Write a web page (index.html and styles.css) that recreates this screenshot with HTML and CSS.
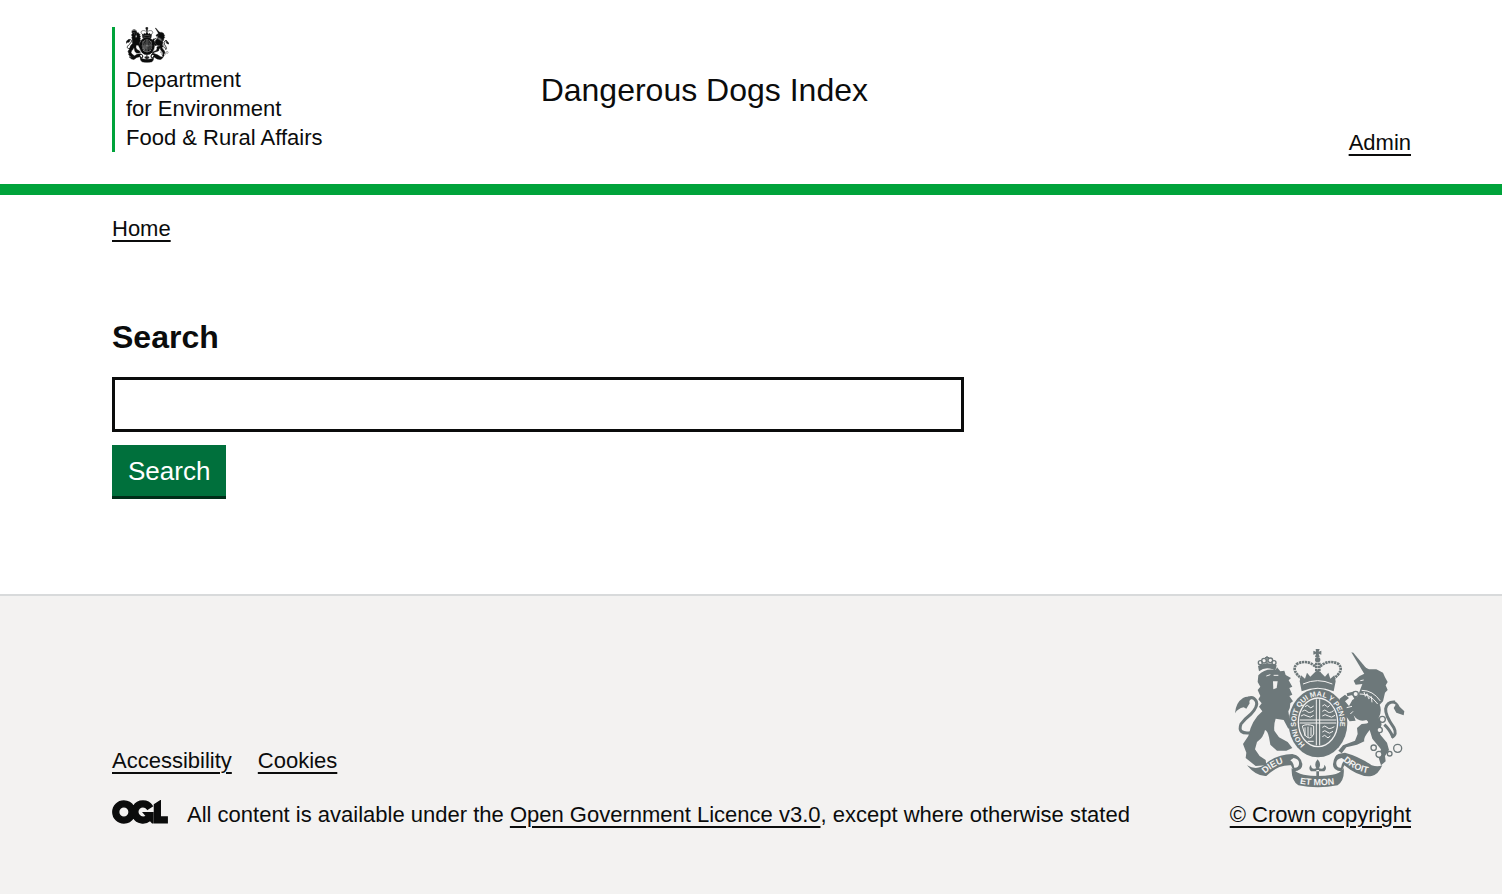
FILE: index.html
```html
<!DOCTYPE html>
<html lang="en">
<head>
<meta charset="utf-8">
<meta name="viewport" content="width=device-width, initial-scale=1">
<title>Dangerous Dogs Index</title>
<link rel="stylesheet" href="styles.css">
</head>
<body>
<svg class="sprite" aria-hidden="true">
  <symbol id="crest" viewBox="36 27 510 420">
    <!-- lion -->
    <path d="M106 106 Q126 84 158 90 L162 82 L172 94 L184 92 L188 105 L204 114 L197 121 L208 140 L199 144 L208 164 L199 168 L210 184 L202 190 Q202 204 196 214 L200 240 L214 254 L196 266 L182 240 L158 236 Q152 252 154 272 L168 292 L194 306 L208 324 L190 332 L162 332 L142 314 L138 292 Q134 272 126 270 Q122 292 102 306 L96 328 L110 348 L128 360 L130 376 L98 378 L68 354 L70 338 L60 312 L76 288 Q86 240 118 214 L108 200 L116 190 L106 178 L112 168 L104 150 L112 140 L104 126Z"/>
    <path d="M130 108 l12 -4 m10 2 l14 0" class="crest-cut-line"/>
    <path class="crest-cut" d="M150 124 l14 0 l-3 20 l-10 4z"/>
    <path class="crest-line" d="M84 278 Q42 284 54 252 Q64 238 84 222 Q106 198 100 184 Q92 168 76 174"/>
    <path d="M36 220 Q38 188 60 174 Q76 166 88 176 Q76 180 80 190 L70 206 L62 202 Q44 206 36 220Z"/>
    <!-- small crown -->
    <path d="M108 94 L105 78 Q132 62 161 76 L157 92 Q130 76 108 94Z"/>
    <g class="crest-thin"><circle cx="112" cy="68" r="6"/><circle cx="123" cy="62" r="7"/><circle cx="142" cy="61" r="7"/><circle cx="153" cy="68" r="6"/><path d="M132 48V76M126 53h12"/></g>
    <!-- main crown -->
    <path d="M278 27h12l-3 8 8-3v12l-8-3 3 10h-14l3-10-8 3V32l8 3z"/>
    <circle cx="284" cy="59" r="8"/>
    <g class="crest-beads"><path d="M238 118 Q202 90 222 72 Q252 56 280 82"/><path d="M330 118 Q366 90 346 72 Q316 56 288 82"/><path d="M280 68V110M289 68V110"/></g>
    <path d="M230 124 L234 106 L246 116 L252 98 L262 110 L274 98 L284 90 L294 98 L306 110 L316 98 L322 116 L334 106 L338 124 L332 154 Q284 132 236 154Z"/>
    <path class="crest-cut-line" d="M240 132 Q284 112 328 132"/>
    <!-- garter and shield -->
    <ellipse cx="285" cy="249" rx="88" ry="103"/>
    <ellipse class="crest-cut" cx="285" cy="247" rx="61" ry="75"/>
    <ellipse cx="285" cy="247" rx="57" ry="71"/>
    <g class="crest-cut-line">
      <path d="M280 178V316M290 178V316M230 240H340M230 249H340"/>
      <path d="M246 200q8-8 12 0t14-2M238 214q8-8 14 0t20-2M234 228q8-8 18 0t20-2M298 198q8-8 12 0t10-2M298 214q8-8 14 0t20-2M298 228q8-8 18 0t20-2"/>
      <path d="M238 258q14-8 34 0v24q-10 22-26 4zM246 262v26M255 260v32M264 262v26"/>
      <path d="M298 262q8-8 14 0t22-2M298 276q8-8 14 0t18-2M298 290q8-8 12 0t12-2M254 304h18"/>
    </g>
    <!-- unicorn -->
    <path d="M385 37 L391 38 L436 92 L424 102Z"/>
    <path d="M424 101 L422 80 L438 88 L460 88 L480 98 L486 112 L494 126 L488 136 L494 150 L486 158 L480 184 L470 194 Q478 212 467 234 Q484 252 468 270 L472 284 L492 308 L498 330 L486 348 L488 364 L474 376 L466 350 L474 328 L448 296 L440 270 Q420 294 424 304 L402 314 L370 322 L356 340 L346 332 L360 316 L396 302 L404 282 L402 264 L416 252 Q446 252 430 240 Q406 248 392 226 L398 242 L380 244 L360 216 L348 192 L350 176 L366 164 L378 174 L366 184 L378 198 L388 180 L404 170 L412 148 L418 132 L398 134 L392 122 L410 108Z"/>
    <path class="crest-line" d="M372 164 L390 160 L402 182"/>
    <g class="crest-cut-line"><path d="M412 122l10-2M410 162q30-2 54 30M416 151q34 0 56 32M423 156l4 13 5-8 5 15 8-6 2 17M375 180l9 4M371 203l16-4M382 222l8-8"/></g>
    <path class="crest-line" d="M506 292 Q524 284 512 262 Q486 226 488 206 Q492 184 516 186"/>
    <path d="M502 184 Q520 178 530 200 L544 214 L542 226 L520 218 L512 204 L518 194Z"/>
    <path class="crest-line" d="M484 254 Q500 268 510 292"/>
    <g class="crest-ring"><circle cx="398" cy="162" r="8"/><circle cx="478" cy="238" r="9"/><circle cx="470" cy="270" r="8"/><circle cx="452" cy="323" r="8"/><circle cx="468" cy="343" r="9"/><circle cx="500" cy="341" r="7"/><circle cx="524" cy="325" r="12"/></g>
    <!-- ribbon -->
    <path d="M72 376 Q104 394 130 370 Q164 342 208 342 Q236 348 238 374 Q238 392 212 394 L204 376 Q164 374 130 408 Q100 410 72 376Z"/>
    <path d="M346 342 Q332 348 330 374 Q330 392 356 394 L364 376 Q410 414 446 408 Q466 404 478 376 Q464 382 446 376 Q410 350 366 338Z"/>
    <path d="M206 384 Q220 400 242 404 Q284 412 328 404 Q350 402 362 384 Q366 420 344 436 Q284 448 226 436 Q204 422 206 384Z"/>
    <path class="crest-cut" d="M212 354q18 4 16 18-1 12-14 11-2-16-12-22zM356 354q-18 4-16 18 1 12 14 11 2-16 12-22z"/>
    <!-- fleur -->
    <path d="M284 358 Q272 372 280 385 Q264 390 264 374 Q254 384 264 394 H304 Q314 384 304 374 Q304 390 288 385 Q296 372 284 358Z M280 390h8v18h-8z"/>
  </symbol>
  <symbol id="ogl" viewBox="-8 -6 499 208">
    <path d="M421.500 142.800V.1l-50.700 32.300v161.100h112.400v-50.700zm-122.300-9.600A47.120 47.120 0 0 1 221 97.800c0-26 21.100-47.100 47.100-47.100 16.700 0 31.400 8.700 39.700 21.800l42.700-27.200A97.630 97.630 0 0 0 268.100 0c-36.500 0-68.300 20.100-85.100 49.700A98 98 0 0 0 97.800 0C43.900 0 0 43.900 0 97.800s43.900 97.800 97.800 97.800c36.500 0 68.300-20.100 85.100-49.700a97.760 97.760 0 0 0 149.600 25.400l19.400 22.200h3v-87.800h-80l24.300 27.500zM97.800 145c-26 0-47.100-21.100-47.100-47.100s21.100-47.100 47.100-47.100 47.100 21.100 47.100 47.100S123.800 145 97.800 145"/>
  </symbol>
</svg>

<header class="header">
  <div class="header-inner wrap">
    <div class="department">
      <svg class="department-crest" aria-hidden="true"><use href="#crest"/></svg>
      <span>Department<br>for Environment<br>Food &amp; Rural Affairs</span>
    </div>
    <div class="service-name">Dangerous Dogs Index</div>
    <a class="link admin-link" href="#">Admin</a>
  </div>
</header>

<main class="main wrap">
  <nav class="breadcrumbs" aria-label="Breadcrumb"><a class="link" href="#">Home</a></nav>
  <form class="search">
    <h1 class="search-title"><label for="search">Search</label></h1>
    <input class="search-input" id="search" type="text" name="search">
    <button class="button" type="submit">Search</button>
  </form>
</main>

<footer class="footer">
  <div class="footer-inner wrap">
    <div class="footer-meta">
      <nav class="footer-links" aria-label="Support links">
        <a class="link" href="#">Accessibility</a>
        <a class="link" href="#">Cookies</a>
      </nav>
      <div class="licence">
        <svg class="ogl-logo" aria-hidden="true"><use href="#ogl"/></svg>
        <span>All content is available under the <a class="link" href="#">Open Government Licence v3.0</a>, except where otherwise stated</span>
      </div>
    </div>
    <a class="link copyright" href="#">
      <svg class="footer-crest" viewBox="36 27 510 420" aria-hidden="true">
        <use href="#crest" x="36" y="27" width="510" height="420"/>
        <defs>
          <path id="motto-garter" d="M246 314 A66 80 0 1 1 324 314"/>
          <path id="ribbon-left" d="M126 402 Q160 368 204 366"/>
          <path id="ribbon-mid" d="M230 431 Q284 441 344 431"/>
          <path id="ribbon-right" d="M360 362 Q400 398 446 400"/>
        </defs>
        <text class="motto"><textPath href="#motto-garter">HONI SOIT QUI MAL Y PENSE</textPath></text>
        <g class="motto motto-ribbon">
          <text><textPath href="#ribbon-left">DIEU</textPath></text>
          <text><textPath href="#ribbon-mid">ET MON</textPath></text>
          <text><textPath href="#ribbon-right">DROIT</textPath></text>
        </g>
      </svg>
      <span>© Crown copyright</span>
    </a>
  </div>
</footer>
</body>
</html>
```
FILE: styles.css
```css
* { box-sizing: border-box; }

body {
  display: flex;
  flex-direction: column;
  min-height: 100vh;
  margin: 0;
  background: #fff;
  color: #0b0c0c;
  font-family: "Liberation Sans", Arial, sans-serif;
  font-size: 22px;
  line-height: 29px;
}

.sprite { position: absolute; width: 0; height: 0; }

.wrap { width: 100%; padding-left: 112px; padding-right: 91px; }

.link {
  color: #0b0c0c;
  text-decoration: underline;
  text-decoration-thickness: 2px;
  text-underline-offset: 4px;
}

/* Crest */
.crest-cut { fill: var(--crest-bg); stroke: none; }
.crest-cut-line { fill: none; stroke: var(--crest-bg); stroke-width: 3; }
.crest-line { fill: none; stroke: currentColor; stroke-width: 9; }
.crest-thin { fill: none; stroke: currentColor; stroke-width: 4; }
.crest-beads { fill: none; stroke: currentColor; stroke-width: 8; stroke-dasharray: 7 2; }
.crest-ring { fill: var(--crest-bg); stroke: currentColor; stroke-width: 4; }
.motto { fill: var(--crest-bg); font-size: 22px; font-weight: bold; }
.motto-ribbon { font-size: 27px; }

/* Header */
.header { border-bottom: 11px solid #00a33b; }
.header-inner {
  display: grid;
  grid-template-columns: 33% 1fr auto;
  min-height: 184px;
  padding-top: 27px;
  padding-bottom: 27px;
}
.department {
  display: flex;
  flex-direction: column;
  gap: 2px;
  align-self: start;
  justify-self: start;
  padding-left: 11px;
  border-left: 3px solid #00a33b;
}
.department-crest {
  --crest-bg: #fff;
  width: 43px;
  height: 36px;
  fill: currentColor;
  stroke: currentColor;
  stroke-width: 6;
}
.service-name { align-self: center; padding-bottom: 4px; font-size: 32px; line-height: 40px; }
.admin-link { align-self: end; }

/* Search */
.main { padding-top: 19px; padding-bottom: 95px; }
.search {
  display: flex;
  flex-direction: column;
  align-items: flex-start;
  margin-top: 74px;
}
.search-title { margin: 0 0 20px; font-size: 32px; line-height: 40px; }
.search-input {
  width: calc(200% / 3 - 14px);
  height: 55px;
  margin-bottom: 13px;
  padding: 8px;
  border: 3px solid #0b0c0c;
  border-radius: 0;
  background: #fff;
  font: inherit;
}
.button {
  padding: 11px 16px 10px;
  border: 0;
  border-bottom: 3px solid #002d18;
  background: #00703c;
  color: #fff;
  font-family: inherit;
  font-size: 26px;
  line-height: 30px;
}

/* Footer */
.footer {
  flex-grow: 1;
  border-top: 2px solid #d8dadb;
  background: #f3f2f1;
}
.footer-inner {
  display: flex;
  align-items: flex-end;
  justify-content: space-between;
  padding-top: 53px;
  padding-bottom: 65px;
}
.footer-links { display: flex; gap: 26px; margin-bottom: 25px; }
.licence { display: flex; gap: 19px; }
.ogl-logo {
  flex: none;
  width: 56px;
  height: 24px;
  fill: currentColor;
  stroke: currentColor;
  stroke-width: 14;
}
.copyright { display: flex; flex-direction: column; align-items: center; gap: 11px; }
.footer-crest {
  --crest-bg: #f3f2f1;
  width: 170px;
  height: 140px;
  color: #6d787a;
  fill: currentColor;
}
```
